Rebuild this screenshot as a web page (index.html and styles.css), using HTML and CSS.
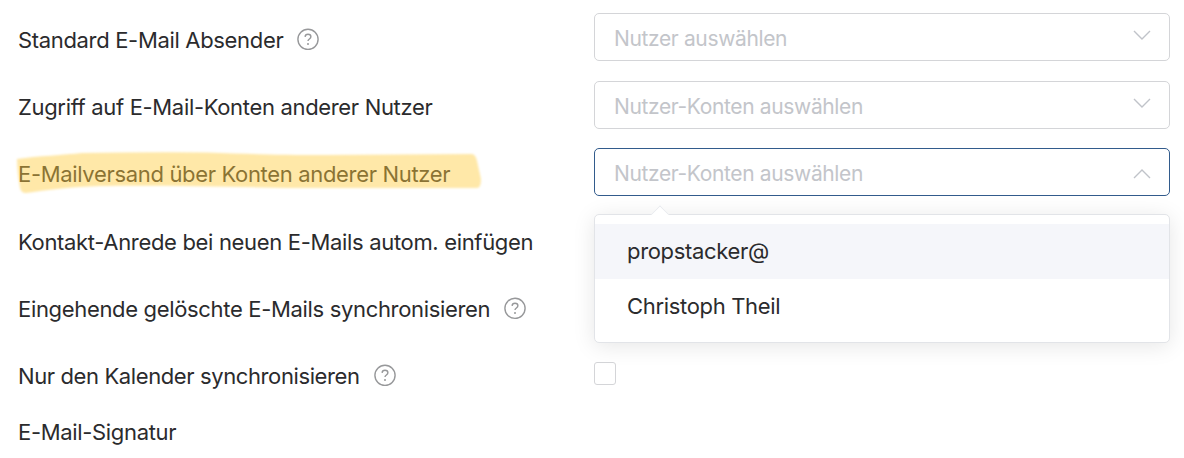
FILE: index.html
```html
<!DOCTYPE html>
<html lang="de">
<head>
    <meta charset="UTF-8">
    <meta name="viewport" content="width=device-width, initial-scale=1.0">
    <title>E-Mail Einstellungen</title>
    <link rel="stylesheet" href="styles.css">
</head>
<body>
    <svg width="0" height="0" class="icon-defs">
        <symbol id="icon-help" viewBox="0 0 24 24">
            <circle cx="12" cy="12.3" r="10.1"/>
            <path d="M9.1 9.9C9.2 8.2 10.4 7.3 12 7.3s2.9 1 2.9 2.5c0 2.2-2.9 2.3-2.9 4.3"/>
            <circle class="dot" cx="12" cy="16.9" r="1"/>
        </symbol>
        <symbol id="icon-arrow" viewBox="0 0 18 10">
            <path d="M1 1l8 8 8-8"/>
        </symbol>
    </svg>

    <form class="settings">
        <div class="row">
            <div class="label"><span>Standard E-Mail Absender</span><svg class="help"><use href="#icon-help"/></svg></div>
            <div class="select">
                <span class="placeholder">Nutzer auswählen</span>
                <svg class="arrow"><use href="#icon-arrow"/></svg>
            </div>
        </div>

        <div class="row access">
            <div class="label"><span>Zugriff auf E-Mail-Konten anderer Nutzer</span></div>
            <div class="select">
                <span class="placeholder">Nutzer-Konten auswählen</span>
                <svg class="arrow"><use href="#icon-arrow"/></svg>
            </div>
        </div>

        <div class="row">
            <div class="label marked">
                <span>E-Mailversand über Konten anderer Nutzer</span>
                <svg class="marker" viewBox="0 0 466 44">
                    <path d="M1 8C22 5 48 4 66 2Q130 1 190 1.500C235 3 265 4 310 4L456 3Q460 4 461 10L465 28Q465 37 461 37L280 37C220 36 140 34 84 35C55 36 30 39 10 42Q5 42 4 37Q1 20 1 8Z"/>
                </svg>
            </div>
            <div class="select open">
                <span class="placeholder">Nutzer-Konten auswählen</span>
                <svg class="arrow"><use href="#icon-arrow"/></svg>
                <div class="dropdown">
                    <div class="option active">propstacker@</div>
                    <div class="option">Christoph Theil</div>
                </div>
            </div>
        </div>

        <div class="row">
            <div class="label"><span>Kontakt-Anrede bei neuen E-Mails autom. einfügen</span></div>
        </div>

        <div class="row">
            <div class="label"><span>Eingehende gelöschte E-Mails synchronisieren</span><svg class="help"><use href="#icon-help"/></svg></div>
        </div>

        <div class="row calendar">
            <div class="label"><span>Nur den Kalender synchronisieren</span><svg class="help"><use href="#icon-help"/></svg></div>
            <div class="checkbox"></div>
        </div>

        <div class="row signature">
            <div class="label"><span>E-Mail-Signatur</span></div>
        </div>
    </form>
</body>
</html>
```
FILE: styles.css
```css
:root {
    --text: #2b2b2d;
    --placeholder: #c3c5ca;
    --border: #d4d5d8;
    --primary: #325b8c;
}

* {
    box-sizing: border-box;
}

body {
    margin: 0;
    height: 458px;
    overflow: hidden;
    background: #fff;
    color: var(--text);
    font-family: Inter, sans-serif;
    font-size: 22px;
    line-height: 26px;
    letter-spacing: -0.33px;
}

.icon-defs {
    position: absolute;
}

.settings {
    padding: 13px 14px 0 18px;
    display: grid;
    grid-auto-rows: 48px;
    row-gap: 19.3px;
}

.row {
    display: grid;
    grid-template-columns: 576px 576px;
    align-items: center;
}

.label {
    position: relative;
    display: flex;
    align-items: center;
    padding-top: 6px;
    white-space: nowrap;
}

.access .label,
.label.marked {
    padding-top: 4px;
}

.calendar .label {
    letter-spacing: -0.39px;
}

.help {
    width: 24px;
    height: 24px;
    margin: -3px 0 0 13px;
    fill: none;
    stroke: #97989a;
    stroke-width: 1.4;
}

.dot {
    fill: #97989a;
    stroke: none;
}

/* Textmarker */
.marker {
    position: absolute;
    left: -2px;
    top: -5.5px;
    width: 466px;
    height: 44px;
    fill: rgba(255, 204, 62, 0.45);
    filter: blur(1px);
}

.select {
    position: relative;
    display: flex;
    justify-content: space-between;
    height: 48px;
    padding: 11px 18px 0 19px;
    border: 1px solid var(--border);
    border-radius: 5px;
    color: var(--placeholder);
}

.access .select {
    margin-top: 1px;
}

.select.open {
    border-color: var(--primary);
}

.placeholder {
    padding-top: 1px;
    font-size: 21px;
    letter-spacing: -0.36px;
}

.arrow {
    width: 18px;
    height: 10px;
    margin-top: 5px;
    fill: none;
    stroke: #c0c3c9;
    stroke-width: 1.4;
}

.open .arrow {
    margin-top: 9px;
    transform: rotate(180deg);
}

.dropdown {
    position: absolute;
    z-index: 10;
    top: 65px;
    left: -1px;
    width: 576px;
    height: 129px;
    padding: 9px 0;
    border: 1px solid #e2e4e8;
    border-radius: 5px;
    background: #fff;
    color: var(--text);
    box-shadow: 0 3px 22px rgba(0, 0, 0, 0.1);
}

.dropdown::before {
    content: '';
    position: absolute;
    top: -7px;
    left: 58px;
    width: 13px;
    height: 13px;
    border: 1px solid #e8eaee;
    border-right: 0;
    border-bottom: 0;
    background: #fff;
    transform: rotate(45deg);
    clip-path: polygon(0 0, 100% 0, 0 100%);
}

.option {
    height: 55px;
    padding: 14px 32px;
}

.option.active {
    background: #f5f6fa;
}

.checkbox {
    width: 22px;
    height: 23px;
    border: 1px solid var(--border);
    border-radius: 3px;
}

.signature {
    margin-top: -23px;
}
```
